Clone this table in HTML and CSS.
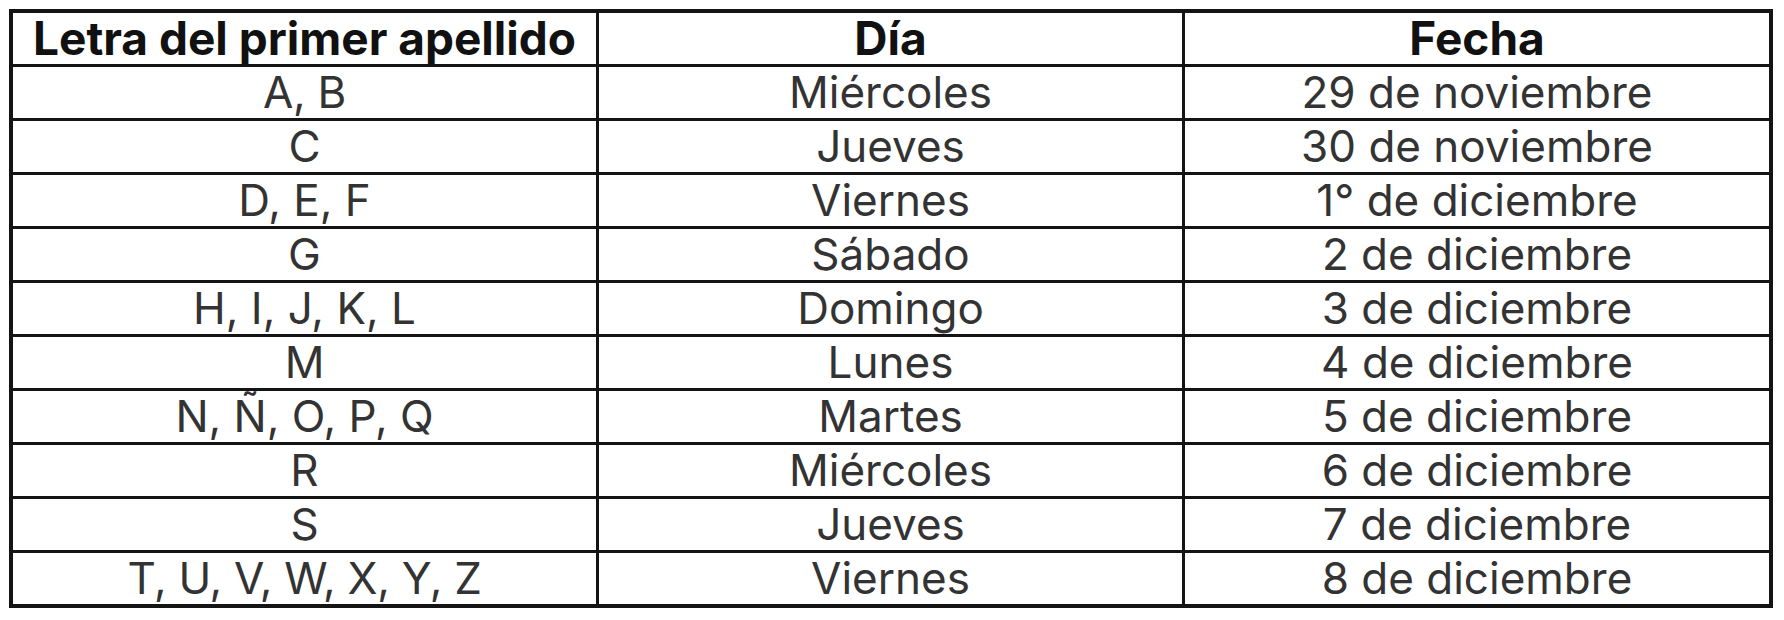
FILE: index.html
```html
<!DOCTYPE html>
<html lang="es">
<head>
<meta charset="utf-8">
<title>Calendario por apellido</title>
<link rel="stylesheet" href="styles.css">
</head>
<body>
<div class="page">
<table class="schedule">
  <colgroup>
    <col class="c1"><col class="c2"><col class="c3">
  </colgroup>
  <thead>
    <tr><th>Letra del primer apellido</th><th>Día</th><th>Fecha</th></tr>
  </thead>
  <tbody>
    <tr><td>A, B</td><td>Miércoles</td><td>29 de noviembre</td></tr>
    <tr><td>C</td><td>Jueves</td><td>30 de noviembre</td></tr>
    <tr><td>D, E, F</td><td>Viernes</td><td>1° de diciembre</td></tr>
    <tr><td>G</td><td>Sábado</td><td>2 de diciembre</td></tr>
    <tr><td>H, I, J, K, L</td><td>Domingo</td><td>3 de diciembre</td></tr>
    <tr><td>M</td><td>Lunes</td><td>4 de diciembre</td></tr>
    <tr><td>N, Ñ, O, P, Q</td><td>Martes</td><td>5 de diciembre</td></tr>
    <tr><td>R</td><td>Miércoles</td><td>6 de diciembre</td></tr>
    <tr><td>S</td><td>Jueves</td><td>7 de diciembre</td></tr>
    <tr><td>T, U, V, W, X, Y, Z</td><td>Viernes</td><td>8 de diciembre</td></tr>
  </tbody>
</table>
</div>
</body>
</html>
```

FILE: styles.css
```css
html, body {
  margin: 0;
  padding: 0;
  background: #ffffff;
}

.page {
  padding: 9px;
}

.schedule {
  border-collapse: separate;
  border-spacing: 0;
  border: 4px solid #141414;
  width: 1764px;
  table-layout: fixed;
  font-family: "Inter", "DejaVu Sans", sans-serif;
}

.c1 { width: 586px; }
.c2 { width: 586px; }
.c3 { width: 584px; }

.schedule th,
.schedule td {
  height: 51px;
  padding: 0;
  text-align: center;
  vertical-align: middle;
  border-right: 3px solid #141414;
  border-bottom: 3px solid #141414;
  line-height: 51px;
  white-space: nowrap;
}

.schedule th:last-child,
.schedule td:last-child {
  border-right: none;
}

.schedule tbody tr:last-child td {
  border-bottom: none;
}

.schedule th {
  font-size: 46px;
  font-weight: 700;
  color: #111111;
}

.schedule td {
  font-size: 44px;
  font-weight: 400;
  color: #333333;
}

.schedule tbody tr:first-child td:first-child,
.schedule tbody tr:last-child td:first-child {
  letter-spacing: -0.3px;
}
```
